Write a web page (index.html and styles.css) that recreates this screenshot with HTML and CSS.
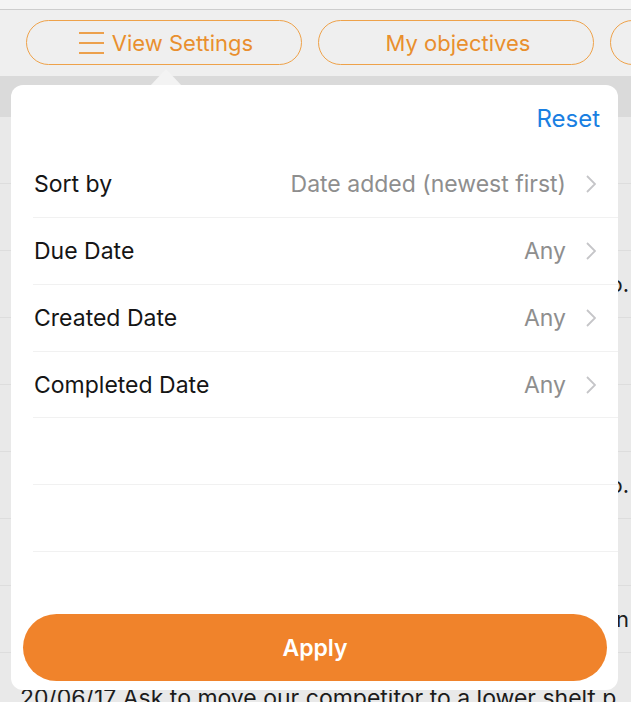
FILE: index.html
```html
<!DOCTYPE html>
<html>
<head>
    <title>View Settings</title>
    <link rel="stylesheet" href="styles.css">
</head>
<body>
    <div class="status-strip"></div>

    <nav class="toolbar">
        <button class="pill">
            <svg class="menu-icon" width="25" height="22" viewBox="0 0 25 22">
                <line x1="0" y1="1" x2="25" y2="1" />
                <line x1="0" y1="11" x2="25" y2="11" />
                <line x1="0" y1="21" x2="25" y2="21" />
            </svg>
            View Settings
        </button>
        <button class="pill">My objectives</button>
        <button class="pill">My team</button>
    </nav>

    <main class="list">
        <div class="list-header"></div>
        <div class="list-row">21/06/17 Check the display</div>
        <div class="list-row">21/06/17 Talk to the manager</div>
        <div class="list-row wide">21/06/17 Ask for a second facing for the new promo.</div>
        <div class="list-row">20/06/17 Review the price labels</div>
        <div class="list-row">20/06/17 Confirm the delivery</div>
        <div class="list-row wide">20/06/17 Confirm the delivery for next week with Jo.</div>
        <div class="list-row">20/06/17 Take pictures of the end cap</div>
        <div class="list-row wide">20/06/17 Place the new brochures by the entrance in</div>
        <div class="list-row last">20/06/17 Ask to move our competitor to a lower shelf p.</div>
    </main>

    <div class="popover-arrow"></div>

    <section class="popover">
        <div class="popover-top">
            <a class="reset-link">Reset</a>
        </div>
        <div class="option-row">
            <span class="option-label">Sort by</span>
            <span class="option-value">Date added (newest first)</span>
            <svg class="chevron" width="10" height="18" viewBox="0 0 10 18"><polyline points="1,1 9,9 1,17" /></svg>
        </div>
        <div class="option-row">
            <span class="option-label">Due Date</span>
            <span class="option-value">Any</span>
            <svg class="chevron" width="10" height="18" viewBox="0 0 10 18"><polyline points="1,1 9,9 1,17" /></svg>
        </div>
        <div class="option-row">
            <span class="option-label">Created Date</span>
            <span class="option-value">Any</span>
            <svg class="chevron" width="10" height="18" viewBox="0 0 10 18"><polyline points="1,1 9,9 1,17" /></svg>
        </div>
        <div class="option-row short">
            <span class="option-label">Completed Date</span>
            <span class="option-value">Any</span>
            <svg class="chevron" width="10" height="18" viewBox="0 0 10 18"><polyline points="1,1 9,9 1,17" /></svg>
        </div>
        <div class="option-row"></div>
        <div class="option-row"></div>
        <div class="popover-spacer"></div>
        <button class="apply-btn">Apply</button>
    </section>
</body>
</html>
```

FILE: styles.css
```css
html, body {
    margin: 0;
    padding: 0;
}
body {
    width: 631px;
    height: 702px;
    overflow: hidden;
    position: relative;
    background: #e9e9e9;
    font-family: Inter, Roboto, sans-serif;
}
.status-strip {
    height: 9px;
    background: #f4f4f4;
    border-bottom: 1px solid #cdcdcd;
}
.toolbar {
    height: 66px;
    background: #efefef;
    display: flex;
    align-items: center;
    gap: 16px;
    padding-left: 26px;
    box-sizing: border-box;
    overflow: hidden;
    white-space: nowrap;
}
.pill {
    flex: 0 0 auto;
    width: 276px;
    height: 45px;
    margin-top: -1px;
    border: 1.5px solid #eea24a;
    border-radius: 23px;
    background: transparent;
    color: #e98f2e;
    font-family: Inter, Roboto, sans-serif;
    font-size: 22px;
    display: flex;
    align-items: center;
    justify-content: center;
    gap: 8px;
    padding: 0 0 0 4px;
}
.menu-icon {
    stroke: #eca04c;
    stroke-width: 2;
}
.list {
    display: flex;
    flex-direction: column;
}
.list-header {
    height: 41px;
    flex: 0 0 auto;
    background: #dadada;
}
.list-row {
    height: 67px;
    flex: 0 0 auto;
    box-sizing: border-box;
    border-bottom: 1px solid #dddddd;
    display: flex;
    align-items: center;
    padding: 0 2px 0 20px;
    font-size: 22px;
    color: #1c1c1c;
    white-space: nowrap;
    overflow: hidden;
}
.list-row.wide {
    justify-content: flex-end;
}
.list-row.last {
    padding-top: 24px;
    font-size: 23px;
}
.popover-arrow {
    position: absolute;
    left: 150px;
    top: 69px;
    width: 0;
    height: 0;
    border-left: 16px solid transparent;
    border-right: 16px solid transparent;
    border-bottom: 17px solid #f3f3f3;
}
.popover {
    position: absolute;
    left: 11px;
    top: 85px;
    width: 607px;
    height: 605px;
    background: #ffffff;
    border-radius: 12px;
    display: flex;
    flex-direction: column;
}
.popover-top {
    height: 66px;
    display: flex;
    align-items: center;
    justify-content: flex-end;
    padding-right: 18px;
}
.reset-link {
    color: #1a7fe2;
    font-size: 24px;
}
.option-row {
    height: 67px;
    flex: 0 0 auto;
    box-sizing: border-box;
    margin-left: 22px;
    padding-left: 1px;
    padding-right: 22px;
    border-bottom: 1px solid #f1f1f1;
    display: flex;
    align-items: center;
    font-size: 23px;
}
.option-row.short {
    height: 66px;
}
.option-label {
    color: #151515;
    flex: 1;
}
.option-value {
    color: #8e8e8e;
    margin-right: 20px;
}
.chevron {
    fill: none;
    stroke: #c5c5c8;
    stroke-width: 1.8;
}
.popover-spacer {
    flex: 1;
}
.apply-btn {
    margin: 0 11px 9px 12px;
    height: 67px;
    border: none;
    border-radius: 34px;
    background: #f0832b;
    color: #ffffff;
    font-family: Inter, Roboto, sans-serif;
    font-size: 23px;
    font-weight: 600;
}
```
